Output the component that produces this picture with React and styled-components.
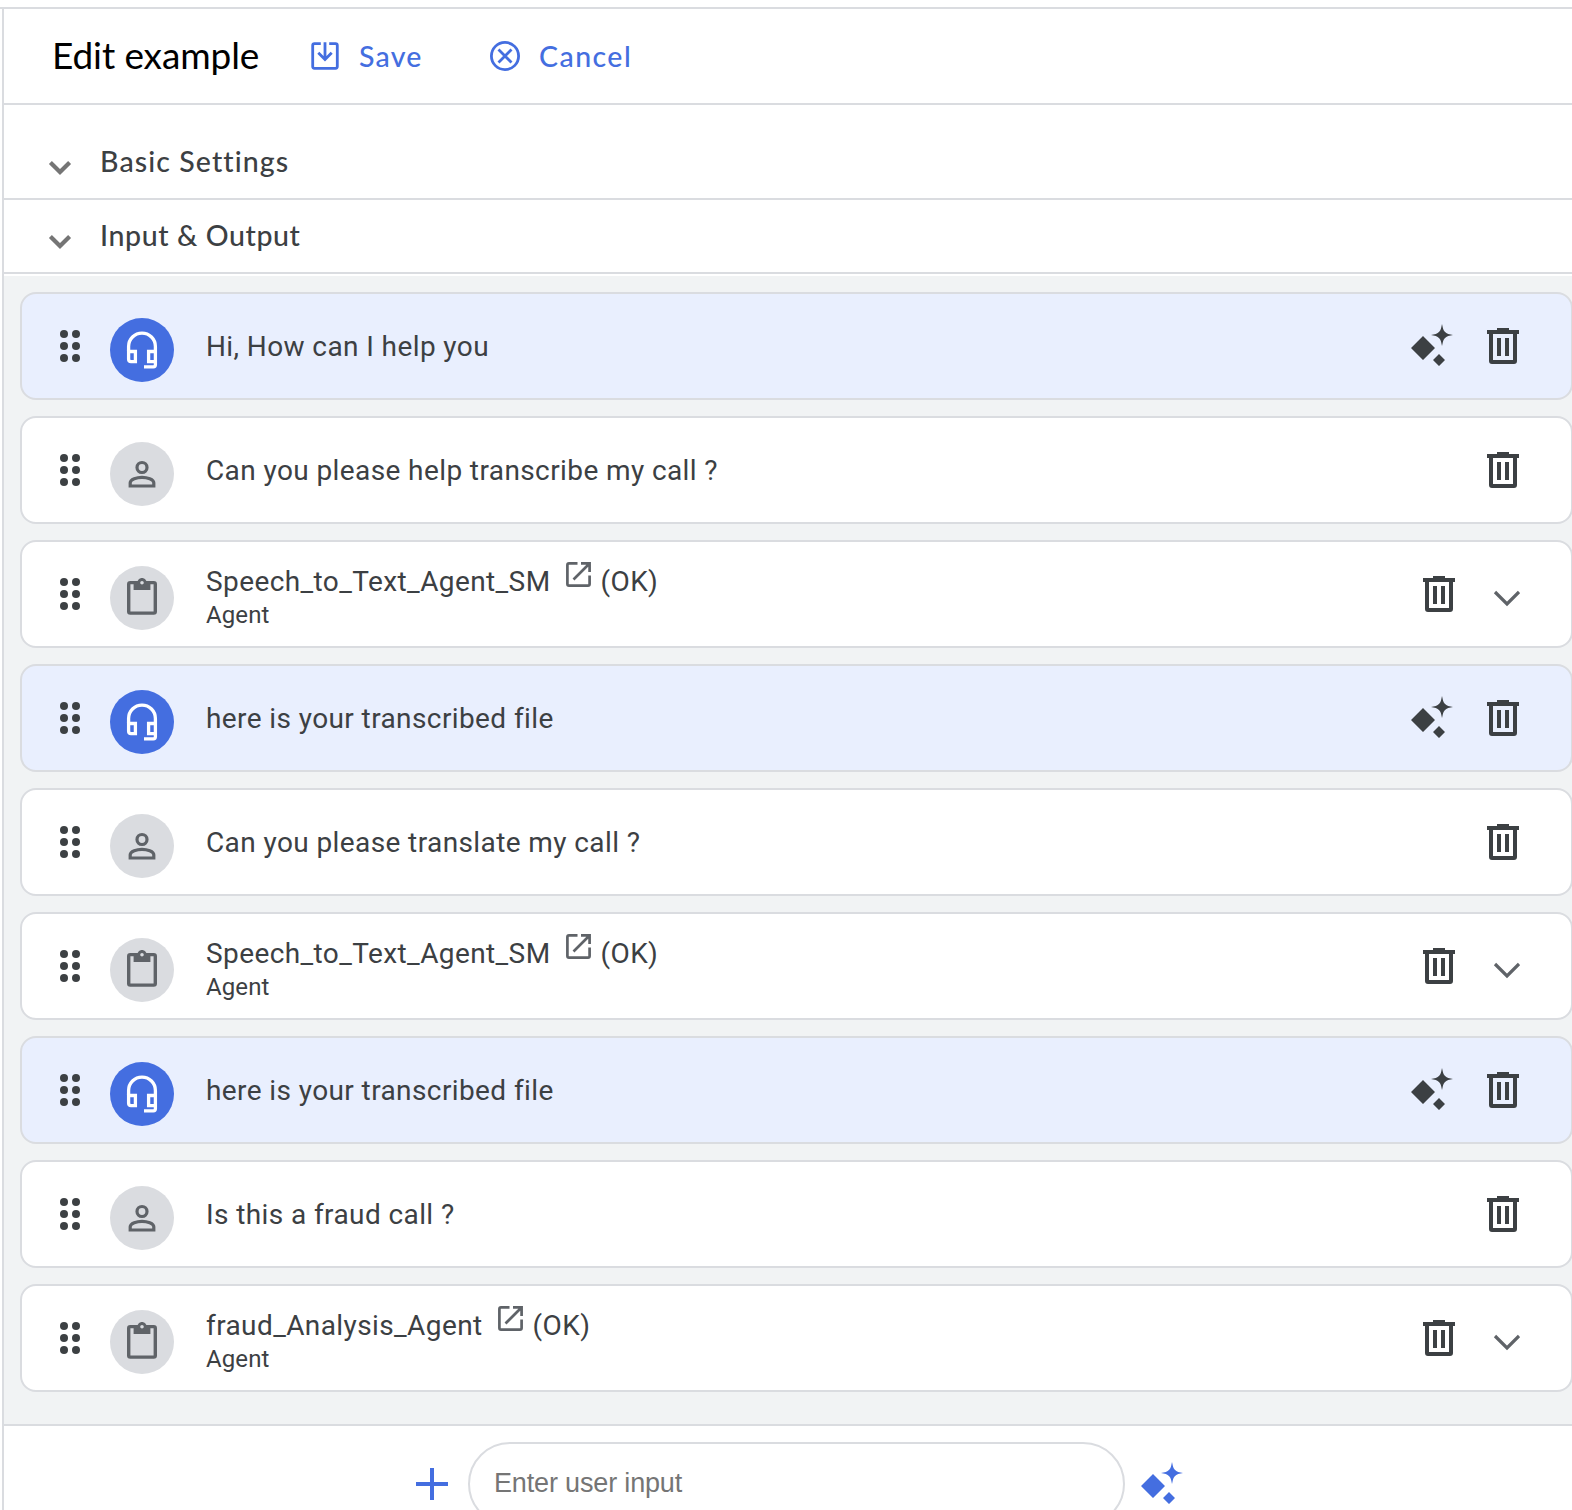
import React from 'react';
import styled, { createGlobalStyle } from 'styled-components';

const Global = createGlobalStyle`
  * { box-sizing: border-box; }
  html, body { margin: 0; background: #fff; overflow: hidden; }
  body { font-family: Roboto, "Liberation Sans", sans-serif; color: #3c4043; }
  button { border: 0; padding: 0; background: none; color: inherit; font: inherit; display: flex; align-items: center; }
  svg { display: block; flex: none; }
`;

const Page = styled.div`
  height: 1510px;
  padding-top: 7px;
  overflow: hidden;
  display: flex;
  flex-direction: column;
`;
const Panel = styled.main`
  flex: 1;
  min-height: 0;
  border-top: 2px solid #dadce0;
  padding-left: 2px;
`;
const Inner = styled.div`
  height: 1501px;
  border-left: 2px solid #dadce0;
`;
const Header = styled.header`
  height: 96px;
  border-bottom: 2px solid #dadce0;
  display: flex;
  align-items: center;
  padding-left: 48px;
`;
const Text = styled.span`
  display: inline-block;
  white-space: nowrap;
  font-size: ${(p) => p.$size || 28}px;
  font-weight: ${(p) => p.$weight || 400};
  letter-spacing: ${(p) => p.$track || 0}px;
  line-height: ${(p) => p.$line || 40}px;
`;
const Heading = styled(Text)`
  font-family: Lato, Roboto, sans-serif;
`;
const Title = styled.h1`
  margin: 0;
  width: 259px;
  font-weight: 400;
  color: #000;
`;
const Action = styled.button`
  && { color: #446ee0; }
  gap: ${(p) => p.$gap}px;
  width: 179px;
`;
const Section = styled.section`
  height: ${(p) => p.$height}px;
  padding: ${(p) => p.$top}px 0 0 44px;
  border-bottom: 2px solid #dadce0;
  display: flex;
  align-items: flex-start;
  gap: 28px;
`;
const ChevronBox = styled.span`
  padding-top: 19px;
  color: #757575;
`;
const List = styled.div`
  margin-top: 2px;
  height: 1148px;
  padding: 16px 0 0 16px;
  background: #f1f3f4;
  display: flex;
  flex-direction: column;
  gap: 16px;
`;
const Card = styled.article`
  height: 108px;
  flex: none;
  margin-right: -1px;
  border: 2px solid #dadce0;
  border-radius: 16px;
  background: ${(p) => (p.$agent ? '#e9effe' : '#fff')};
  display: flex;
  align-items: center;
  padding: 0 52px 0 38px;
`;
const Dots = styled.span`
  display: grid;
  grid-template-columns: 8px 8px;
  gap: 4px;
  margin-right: 30px;
`;
const Dot = styled.i`
  width: 8px;
  height: 8px;
  border-radius: 50%;
  background: #3c4043;
`;
const Avatar = styled.span`
  width: 64px;
  height: 64px;
  margin-top: 8px;
  padding-bottom: ${(p) => (p.$lift ? 3 : 0)}px;
  border-radius: 50%;
  background: ${(p) => (p.$agent ? '#446ee0' : '#dadce0')};
  color: ${(p) => (p.$agent ? '#fff' : '#5f6368')};
  display: grid;
  place-items: center;
`;
const Body = styled.div`
  flex: 1;
  margin-left: 32px;
  padding-top: ${(p) => (p.$tool ? 7 : 2)}px;
  display: flex;
  flex-direction: column;
`;
const ToolLine = styled.div`
  height: 36px;
  display: flex;
  align-items: center;
`;
const ToolKind = styled(Text)`
  margin-top: -1px;
  margin-bottom: 1px;
`;
const LinkIcon = styled.a`
  margin: -14px 10px 0 15px;
  color: #5f6368;
`;
const Actions = styled.div`
  display: flex;
  align-items: center;
  gap: 34px;
  color: #3c4043;
`;
const CardSparkle = styled.button`
  margin-top: -2px;
`;
const Expand = styled.button`
  && { color: #5f6368; }
  padding-top: 8px !important;
  margin-left: 4px;
  margin-right: -1px;
`;
const Footer = styled.footer`
  border-top: 2px solid #dadce0;
  height: 104px;
  padding: 16px 0 0 412px;
  display: flex;
  align-items: flex-start;
  color: #446ee0;
`;
const AddBtn = styled.button`
  margin-top: 26px;
  margin-right: 20px;
`;
const Input = styled.input`
  width: 657px;
  height: 84px;
  border: 2px solid #dadce0;
  border-radius: 42px;
  padding: 0 24px 2px;
  background: #fff;
  font: 27px "Liberation Sans", Arial, sans-serif;
  letter-spacing: -0.16px;
  &::placeholder { color: #757575; opacity: 1; }
`;
const Generate = styled.button`
  margin: 20px 0 0 16px;
`;

const SaveIcon = () => (
  <svg width="28" height="28" viewBox="0 0 28 28" fill="none" stroke="currentColor" strokeWidth="2.8">
    <path d="M9.8 1.7H3.4Q1.7 1.7 1.7 3.4V24.6Q1.7 26.3 3.4 26.3H24.6Q26.3 26.3 26.3 24.6V3.4Q26.3 1.7 24.6 1.7H18.2" />
    <path d="M14 0.3V17.5M7.3 10.8L14 17.5L20.7 10.8" />
  </svg>
);
const CancelIcon = () => (
  <svg width="30" height="30" viewBox="0 0 30 30" fill="none" stroke="currentColor" strokeWidth="2.8">
    <circle cx="15" cy="15" r="13.6" />
    <path d="M8.5 8.5L21.5 21.5M21.5 8.5L8.5 21.5" />
  </svg>
);
const Chevron = () => (
  <svg width="24" height="16" viewBox="0 0 24 16" fill="none" stroke="currentColor" strokeWidth="4.2">
    <path d="M2.4 2.4L12 12L21.6 2.4" />
  </svg>
);
const ExpandChevron = () => (
  <svg width="27" height="17" viewBox="0 0 27 17" fill="none" stroke="currentColor" strokeWidth="3.2">
    <path d="M2 2L14 14L26 2" />
  </svg>
);
const Headset = () => (
  <svg width="32" height="38" viewBox="0 0 32 38" fill="none" stroke="currentColor" strokeWidth="3.3">
    <path d="M2.6 20.5V15.5A13.4 13.4 0 0 1 29.4 15.5V33.8Q29.4 35.8 27.4 35.8H18" />
    <path d="M2.6 20.5H9.4V30.6H5Q2.6 30.6 2.6 28.2ZM29.4 20.5H22.6V30.6H29.4" />
  </svg>
);
const Person = () => (
  <svg width="28" height="28" viewBox="0 0 28 28" fill="none" stroke="currentColor" strokeWidth="3.2">
    <circle cx="14" cy="7.5" r="5" />
    <path d="M2.2 26V22.8C2.2 19.3 9 17.3 14 17.3S25.8 19.3 25.8 22.8V26Z" />
  </svg>
);
const Clipboard = () => (
  <svg width="30" height="37" viewBox="0 0 30 37">
    <path fill="currentColor" fillRule="evenodd" d="M3.3 3H10.6A4.7 4.7 0 0 1 19.4 3H26.7Q30 3 30 6.3V33.5Q30 36.8 26.7 36.8H3.3Q0 36.8 0 33.5V6.3Q0 3 3.3 3ZM3.4 6.3V33.4H26.6V6.3H23.4V12H6.6V6.3ZM15 3A1.8 1.8 0 1 0 15 6.6A1.8 1.8 0 1 0 15 3Z" />
  </svg>
);
const External = () => (
  <svg width="25" height="25" viewBox="0 0 25 25" fill="none" stroke="currentColor" strokeWidth="2.7">
    <path d="M11.5 1.4H3Q1.4 1.4 1.4 3V22Q1.4 23.6 3 23.6H22Q23.6 23.6 23.6 22V13.5M15 1.4H23.6V10M23 2L7.5 17.5" />
  </svg>
);
const Trash = () => (
  <svg width="32" height="36" viewBox="0 0 32 36">
    <path fill="currentColor" fillRule="evenodd" d="M10 0H22V2H32V6H30V33Q30 36 27 36H5Q2 36 2 33V6H0V2H10ZM6 6V32H26V6ZM10 10H14V28H10ZM18 10H22V28H18Z" />
  </svg>
);
const Sparkle = () => (
  <svg width="42" height="42" viewBox="0 0 42 42" fill="currentColor">
    <path d="M12 12L24 24L12 36L0 24ZM28 30L34 36L28 42L22 36ZM31 0L32 4.6Q33 8.2 37.2 10L42 11L37.2 12Q33 13.8 32 17.4L31 22L30 17.4Q29 13.8 24.8 12L20 11L24.8 10Q29 8.2 30 4.6Z" />
  </svg>
);
const Plus = () => (
  <svg width="32" height="32" viewBox="0 0 32 32">
    <path d="M14 0H18V14H32V18H18V32H14V18H0V14H14Z" fill="currentColor" />
  </svg>
);

const avatars = { agent: Headset, user: Person, tool: Clipboard };
const steps = [
  { kind: 'agent', text: 'Hi, How can I help you' },
  { kind: 'user', text: 'Can you please help transcribe my call ?' },
  { kind: 'tool', text: 'Speech_to_Text_Agent_SM' },
  { kind: 'agent', text: 'here is your transcribed file' },
  { kind: 'user', text: 'Can you please translate my call ?' },
  { kind: 'tool', text: 'Speech_to_Text_Agent_SM' },
  { kind: 'agent', text: 'here is your transcribed file' },
  { kind: 'user', text: 'Is this a fraud call ?' },
  { kind: 'tool', text: 'fraud_Analysis_Agent' },
];

function Step({ kind, text }) {
  const Icon = avatars[kind];
  const isAgent = kind === 'agent';
  const isTool = kind === 'tool';
  return (
    <Card $agent={isAgent}>
      <Dots>{[0, 1, 2, 3, 4, 5].map((n) => <Dot key={n} />)}</Dots>
      <Avatar $agent={isAgent} $lift={isTool}><Icon /></Avatar>
      <Body $tool={isTool}>
        {isTool ? (
          <>
            <ToolLine>
              <Text $track={0.4}>{text}</Text>
              <LinkIcon><External /></LinkIcon>
              <Text $track={0.4}>(OK)</Text>
            </ToolLine>
            <ToolKind $size={24} $line={32} $track={0.1}>Agent</ToolKind>
          </>
        ) : <Text $track={0.4}>{text}</Text>}
      </Body>
      <Actions>
        {isAgent && <CardSparkle aria-label="Generate"><Sparkle /></CardSparkle>}
        <button aria-label="Delete"><Trash /></button>
        {isTool && <Expand aria-label="Expand"><ExpandChevron /></Expand>}
      </Actions>
    </Card>
  );
}

export default function App() {
  return (
    <Page>
      <Global />
      <Panel>
        <Inner>
          <Header>
            <Title><Heading $size={37} $track={-0.1}>Edit example</Heading></Title>
            <Action $gap={20}><SaveIcon /><Heading $size={28.5} $weight={500} $track={1.2}>Save</Heading></Action>
            <Action $gap={19}><CancelIcon /><Heading $size={28.5} $weight={500} $track={1.45}>Cancel</Heading></Action>
          </Header>
          <Section $height={95} $top={36}>
            <ChevronBox><Chevron /></ChevronBox>
            <Heading $size={28.5} $weight={500} $track={1.1}>Basic Settings</Heading>
          </Section>
          <Section $height={74} $top={15}>
            <ChevronBox><Chevron /></ChevronBox>
            <Heading $size={28.5} $weight={500} $track={0.6}>Input &amp; Output</Heading>
          </Section>
          <List>{steps.map((step, i) => <Step key={i} {...step} />)}</List>
          <Footer>
            <AddBtn aria-label="Add"><Plus /></AddBtn>
            <Input placeholder="Enter user input" />
            <Generate aria-label="Generate"><Sparkle /></Generate>
          </Footer>
        </Inner>
      </Panel>
    </Page>
  );
}
